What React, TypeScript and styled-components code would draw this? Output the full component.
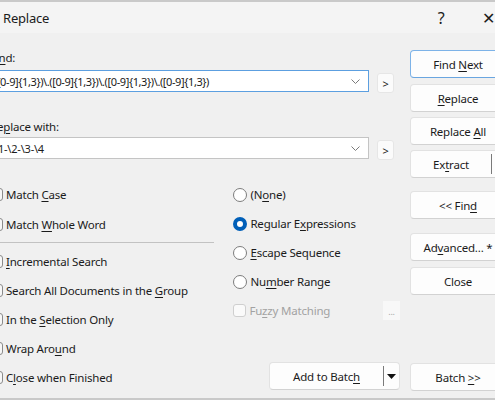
import styled, { createGlobalStyle } from "styled-components";

const GlobalStyle = createGlobalStyle`
  html, body {
    margin: 0;
    padding: 0;
    background: #f0f0f0;
  }
  body {
    font-family: "Noto Sans", "Open Sans", sans-serif;
    font-size: 11.5px;
    letter-spacing: -0.2px;
    color: #1b1b1b;
  }
`;

const Window = styled.div`
  width: 495px;
  height: 400px;
  overflow: hidden;
  background: #f0f0f0;
  border-top: 2px solid #c9c9c9;
  box-sizing: border-box;
  display: flex;
  flex-direction: column;
`;

const TitleBar = styled.div`
  height: 31px;
  flex: none;
  display: flex;
  align-items: center;
  background: #f4f4f4;
  padding-left: 3px;
`;

const Title = styled.div`
  font-size: 13px;
  flex: 1;
`;

const TitleIcon = styled.div<{ $gap: number }>`
  width: 14px;
  font-size: 16px;
  text-align: center;
  margin-left: ${(p) => p.$gap}px;
`;

const Body = styled.div`
  flex: 1;
  display: flex;
  border-bottom: 2px solid #c9c9c9;
`;

const LeftArea = styled.div`
  width: 410px;
  margin-left: -10px;
  flex: none;
  display: flex;
  flex-direction: column;
`;

const FieldLabel = styled.div<{ $top: number }>`
  height: 16px;
  line-height: 16px;
  margin-top: ${(p) => p.$top}px;
`;

const FieldRow = styled.div<{ $top: number }>`
  height: 22px;
  display: flex;
  align-items: flex-start;
  margin-top: ${(p) => p.$top}px;
`;

const Combo = styled.div<{ $focused?: boolean }>`
  width: 379px;
  height: 22px;
  box-sizing: border-box;
  background: #fff;
  border: 1px solid ${(p) => (p.$focused ? "#5c9fe0" : "#c4c4c4")};
  display: flex;
  align-items: center;
  padding: 0 8px 0 3px;
  overflow: hidden;
`;

const ComboText = styled.div<{ $tight?: boolean }>`
  flex: 1;
  white-space: nowrap;
  overflow: hidden;
  font-size: 11px;
  letter-spacing: ${(p) => (p.$tight ? "-0.4px" : "-0.2px")};
`;

const Chevron = styled.svg`
  flex: none;
  margin-left: 4px;
`;

const SmallButton = styled.div`
  width: 17px;
  height: 20px;
  flex: none;
  margin-top: 3px;
  margin-left: 8px;
  box-sizing: border-box;
  background: #fbfbfb;
  border: 1px solid #e6e6e6;
  border-radius: 3px;
  display: flex;
  align-items: center;
  justify-content: center;
  font-size: 11px;
`;

const Options = styled.div`
  display: flex;
  margin-top: 20px;
`;

const CheckColumn = styled.div`
  width: 225px;
  display: flex;
  flex-direction: column;
`;

const RadioColumn = styled.div`
  width: 167px;
  margin-left: 19px;
  margin-top: 1px;
  display: flex;
  flex-direction: column;
`;

const OptionRow = styled.div<{ $h: number; $disabled?: boolean }>`
  height: ${(p) => p.$h}px;
  display: flex;
  align-items: center;
  white-space: nowrap;
  color: ${(p) => (p.$disabled ? "#a2a2a2" : "inherit")};
`;

const OptionText = styled.span`
  white-space: pre;
`;

const Box = styled.div<{ $disabled?: boolean }>`
  width: 13px;
  height: 13px;
  box-sizing: border-box;
  border: 1px solid ${(p) => (p.$disabled ? "#cfcfcf" : "#8b8b8b")};
  border-radius: 3px;
  background: ${(p) => (p.$disabled ? "#fafafa" : "#f7f7f7")};
  margin-right: 3px;
  flex: none;
`;

const Radio = styled.div<{ $checked?: boolean }>`
  width: 14px;
  height: 14px;
  box-sizing: border-box;
  border-radius: 50%;
  border: ${(p) => (p.$checked ? "4px solid #005fb8" : "1px solid #7c7c7c")};
  background: #fff;
  margin-right: 3px;
  flex: none;
`;

const Separator = styled.div`
  height: 1px;
  background: #c2c2c2;
  margin: 3px 0 4px 0;
`;

const DotsButton = styled.div`
  margin-left: auto;
  width: 17px;
  height: 19px;
  background: #f8f8f8;
  color: #a8a8a8;
  font-size: 9px;
  display: flex;
  align-items: flex-end;
  justify-content: center;
  padding-bottom: 2px;
  box-sizing: border-box;
`;

const RightColumn = styled.div`
  width: 96px;
  flex: none;
  margin-left: 10px;
  display: flex;
  flex-direction: column;
`;

const Button = styled.div<{ $top: number; $primary?: boolean; $w?: number }>`
  width: ${(p) => p.$w ?? 96}px;
  height: 28px;
  flex: none;
  margin-top: ${(p) => p.$top}px;
  box-sizing: border-box;
  background: #fdfdfd;
  border: 1px solid ${(p) => (p.$primary ? "#7db3e8" : "#e2e2e2")};
  border-bottom-color: ${(p) => (p.$primary ? "#6aa6e0" : "#d2d2d2")};
  border-radius: 4px;
  display: flex;
  align-items: center;
  overflow: hidden;
`;

const ButtonLabel = styled.div<{ $w?: number }>`
  flex: ${(p) => (p.$w ? "none" : "1")};
  width: ${(p) => (p.$w ? `${p.$w}px` : "auto")};
  text-align: center;
  white-space: pre;
`;

const SplitPart = styled.div`
  width: 15px;
  height: 20px;
  flex: none;
  border-left: 1px solid #7a7a7a;
  display: flex;
  align-items: center;
  justify-content: center;
`;

const Key = styled.span`
  text-decoration: underline;
  text-underline-offset: 2px;
`;

const BatchRow = styled.div`
  display: flex;
  justify-content: flex-end;
  margin-top: 37px;
`;

const checks1 = [
  <>Match <Key>C</Key>ase</>,
  <>Match <Key>W</Key>hole Word</>,
];

const checks2 = [
  <><Key>I</Key>ncremental Search</>,
  <>Search All Documents in the <Key>G</Key>roup</>,
  <>In the <Key>S</Key>election Only</>,
  <>Wrap Aro<Key>u</Key>nd</>,
  <>C<Key>l</Key>ose when Finished</>,
];

const radios = [
  { label: <>(N<Key>o</Key>ne)</>, checked: false },
  { label: <>Regular E<Key>x</Key>pressions</>, checked: true },
  { label: <><Key>E</Key>scape Sequence</>, checked: false },
  { label: <>Nu<Key>m</Key>ber Range</>, checked: false },
];

const ChevronDown = () => (
  <Chevron width="9" height="5" viewBox="0 0 9 5">
    <path d="M0.5 0.5 L4.5 4.5 L8.5 0.5" fill="none" stroke="#7a7a7a" strokeWidth="1" />
  </Chevron>
);

const Triangle = () => (
  <svg width="9" height="5" viewBox="0 0 9 5">
    <path d="M0 0 H9 L4.5 5 Z" fill="#111" />
  </svg>
);

export default function App() {
  return (
    <Window>
      <GlobalStyle />
      <TitleBar>
        <Title>Replace</Title>
        <TitleIcon $gap={0}>?</TitleIcon>
        <TitleIcon $gap={33}>✕</TitleIcon>
      </TitleBar>
      <Body>
        <LeftArea>
          <FieldLabel $top={17}>Fi<Key>n</Key>d:</FieldLabel>
          <FieldRow $top={4}>
            <Combo $focused>
              <ComboText $tight>([0-9]{"{1,3}"})\.([0-9]{"{1,3}"})\.([0-9]{"{1,3}"})\.([0-9]{"{1,3}"})</ComboText>
              <ChevronDown />
            </Combo>
            <SmallButton>&gt;</SmallButton>
          </FieldRow>
          <FieldLabel $top={27}>Re<Key>p</Key>lace with:</FieldLabel>
          <FieldRow $top={2}>
            <Combo>
              <ComboText>\1-\2-\3-\4</ComboText>
              <ChevronDown />
            </Combo>
            <SmallButton>&gt;</SmallButton>
          </FieldRow>
          <Options>
            <CheckColumn>
              {checks1.map((c, i) => (
                <OptionRow key={i} $h={30}>
                  <Box />
                  <OptionText>{c}</OptionText>
                </OptionRow>
              ))}
              <Separator />
              {checks2.map((c, i) => (
                <OptionRow key={i} $h={29}>
                  <Box />
                  <OptionText>{c}</OptionText>
                </OptionRow>
              ))}
            </CheckColumn>
            <RadioColumn>
              {radios.map((r, i) => (
                <OptionRow key={i} $h={29}>
                  <Radio $checked={r.checked} />
                  <OptionText>{r.label}</OptionText>
                </OptionRow>
              ))}
              <OptionRow $h={29} $disabled>
                <Box $disabled />
                <OptionText>Fu<Key>z</Key>zy Matching</OptionText>
                <DotsButton>...</DotsButton>
              </OptionRow>
              <BatchRow>
                <Button $top={0} $w={131}>
                  <ButtonLabel>Add to Batc<Key>h</Key></ButtonLabel>
                  <SplitPart>
                    <Triangle />
                  </SplitPart>
                </Button>
              </BatchRow>
            </RadioColumn>
          </Options>
        </LeftArea>
        <RightColumn>
          <Button $top={17} $primary>
            <ButtonLabel>Find <Key>N</Key>ext</ButtonLabel>
          </Button>
          <Button $top={6}>
            <ButtonLabel><Key>R</Key>eplace</ButtonLabel>
          </Button>
          <Button $top={5}>
            <ButtonLabel>Replace <Key>A</Key>ll</ButtonLabel>
          </Button>
          <Button $top={5}>
            <ButtonLabel $w={80}>Ex<Key>t</Key>ract</ButtonLabel>
            <SplitPart />
          </Button>
          <Button $top={13}>
            <ButtonLabel>&lt;&lt; Fin<Key>d</Key></ButtonLabel>
          </Button>
          <Button $top={14}>
            <ButtonLabel>Ad<Key>v</Key>anced... *</ButtonLabel>
          </Button>
          <Button $top={6}>
            <ButtonLabel>Close</ButtonLabel>
          </Button>
          <Button $top={68}>
            <ButtonLabel>Batch <Key>&gt;</Key>&gt;</ButtonLabel>
          </Button>
        </RightColumn>
      </Body>
    </Window>
  );
}
